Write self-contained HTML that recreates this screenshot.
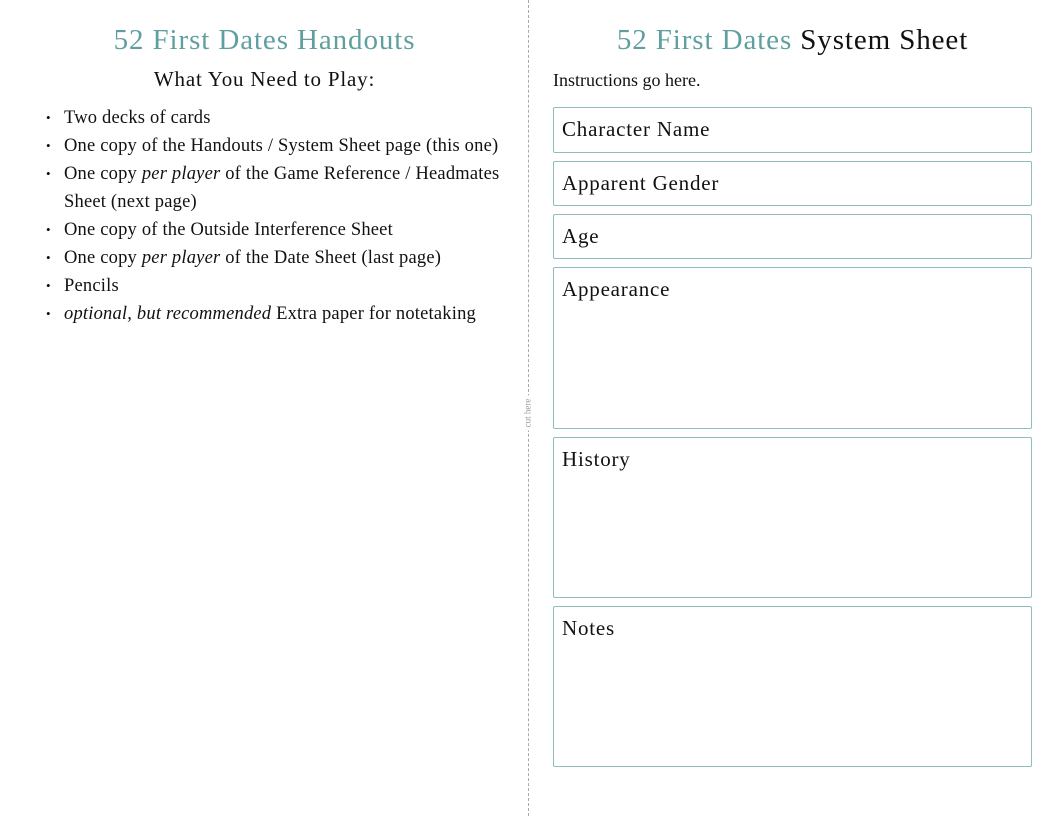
<!DOCTYPE html>
<html><head><meta charset="utf-8"><style>
body{margin:0;width:1056px;height:816px;background:#fff;position:relative;overflow:hidden;font-family:"Liberation Serif",serif;color:#111}
.t{position:absolute;font-size:29px;letter-spacing:0.9px;color:#5f9fa0;text-align:center;white-space:nowrap}
.h2{position:absolute;left:0;width:529px;top:67px;text-align:center;font-size:21px;letter-spacing:0.8px}
ul{position:absolute;left:46px;top:104px;margin:0;padding:0;list-style:none;font-size:18.5px;letter-spacing:0.2px;line-height:28px;width:470px}
li{position:relative;padding-left:18px}
li:before{content:"•";position:absolute;left:0;font-size:13px}
.div{position:absolute;left:528px;top:0;height:816px;border-left:1px dashed #aaa}
.cut{position:absolute;left:510px;top:408px;font-size:9px;color:#999;transform:rotate(-90deg);background:#fff;padding:0 3px}
.box{position:absolute;left:553px;width:479px;border:1px solid #8fbcbc;border-radius:2px;box-sizing:border-box;font-size:21px;letter-spacing:0.8px;padding:9px 8px}
</style></head><body>
<div class="t" style="left:0;width:529px;top:24px">52 First Dates Handouts</div>
<div class="h2">What You Need to Play:</div>
<ul>
<li>Two decks of cards</li>
<li>One copy of the Handouts / System Sheet page (this one)</li>
<li>One copy <i>per player</i> of the Game Reference / Headmates Sheet (next page)</li>
<li>One copy of the Outside Interference Sheet</li>
<li>One copy <i>per player</i> of the Date Sheet (last page)</li>
<li>Pencils</li>
<li><i>optional, but recommended</i> Extra paper for notetaking</li>
</ul>
<div class="div"></div>
<div class="cut">cut here</div>
<div class="t" style="left:529px;width:527px;top:24px">52 First Dates <span style="color:#111">System Sheet</span></div>
<div style="position:absolute;left:553px;top:70px;font-size:18px">Instructions go here.</div>
<div class="box" style="top:107px;height:46px">Character Name</div>
<div class="box" style="top:161px;height:45px">Apparent Gender</div>
<div class="box" style="top:214px;height:45px">Age</div>
<div class="box" style="top:267px;height:162px">Appearance</div>
<div class="box" style="top:437px;height:161px">History</div>
<div class="box" style="top:606px;height:161px">Notes</div>
</body></html>
